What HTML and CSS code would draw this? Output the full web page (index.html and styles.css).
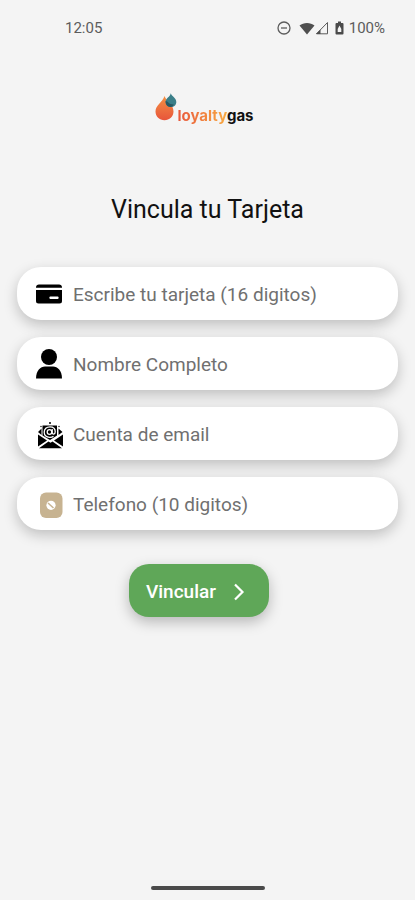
FILE: index.html
```html
<!DOCTYPE html>
<html lang="es">
<head>
<meta charset="UTF-8">
<meta name="viewport" content="width=device-width, initial-scale=1.0">
<title>Vincula tu Tarjeta</title>
<link rel="stylesheet" href="styles.css">
</head>
<body>
  <div class="status-bar">
    <span>12:05</span>
    <div class="status-icons">
      <svg class="icon-dnd" width="14" height="14" viewBox="0 0 14 14" fill="none" stroke="#5c5c5c" stroke-width="1.3">
        <circle cx="7" cy="7" r="6"/>
        <path d="M4 7h6"/>
      </svg>
      <svg width="16" height="13" viewBox="0 0 16 13">
        <path d="M0.5 3.5C4.5 0 11.5 0 15.5 3.5L8 12.5Z" fill="#4f4f4f"/>
      </svg>
      <svg width="14" height="14" viewBox="0 0 14 14">
        <path d="M1.5 12.8H12.5V1.5Z" fill="none" stroke="#5c5c5c"/>
        <path d="M1 13L5.5 8.5V13Z" fill="#4f4f4f"/>
      </svg>
      <svg class="icon-battery" width="9" height="14" viewBox="0 0 9 14">
        <path d="M3 0.5h3v1.5h1.5a1 1 0 0 1 1 1v9.5a1 1 0 0 1-1 1h-6a1 1 0 0 1-1-1V3a1 1 0 0 1 1-1H3z" fill="#4a4a4a"/>
        <path d="M4.5 4.5L6.3 8v3H2.7V8z" fill="#f4f4f4"/>
      </svg>
      <span>100%</span>
    </div>
  </div>

  <main class="container">
    <div class="logo">
      <svg width="22" height="28" viewBox="0 0 22 28">
        <defs>
          <linearGradient id="flame" x1="0" y1="0" x2="0" y2="1">
            <stop offset="0" stop-color="#f39143"/>
            <stop offset="1" stop-color="#e8553b"/>
          </linearGradient>
        </defs>
        <path d="M9.5 3C11 8 18.5 11 18.5 18.5C18.5 23.5 14.5 27.2 9.5 27.2C4.5 27.2 0.5 23.5 0.5 18.5C0.5 12 7.5 9.5 9.5 3Z" fill="url(#flame)"/>
        <path d="M15.8 0.3C16.8 3.5 21.3 5 21.3 9C21.3 12 19 14 16 14C13 14 10.6 12 10.6 9C10.6 5.3 15 4 15.8 0.3Z" fill="#3b7f89"/>
        <path d="M10.6 8C13 8 13.5 11.5 18.8 11.5C18 13 17 14 15.5 14C12.5 13.8 10.4 11.5 10.6 8Z" fill="#285761"/>
      </svg>
      <span class="logo-text"><span class="logo-loyalty">loyalty</span>gas</span>
    </div>

    <h1>Vincula tu Tarjeta</h1>

    <form class="card-form">
      <label class="field">
        <svg class="field-icon" width="28" height="32" viewBox="0 0 28 32">
          <path d="M1 9.2a3 3 0 0 1 3-2.7h20a3 3 0 0 1 3 2.7v0.6H1z"/>
          <path d="M1 12h26v11a2.5 2.5 0 0 1-2.5 2.5h-21A2.5 2.5 0 0 1 1 23z"/>
          <rect x="14.5" y="18.5" width="9" height="2.5" rx="0.8" fill="#fff"/>
        </svg>
        <input type="text" aria-label="Tarjeta" placeholder="Escribe tu tarjeta (16 digitos)">
      </label>
      <label class="field">
        <svg class="field-icon" width="28" height="32" viewBox="0 0 28 32">
          <circle cx="14" cy="9" r="8"/>
          <path d="M1 30.5C1 22.5 5.5 18.5 10 18.5h8c4.5 0 9 4 9 12z"/>
        </svg>
        <input type="text" aria-label="Nombre" placeholder="Nombre Completo">
      </label>
      <label class="field">
        <svg class="field-icon" width="28" height="32" viewBox="0 0 28 32">
          <path d="M7.5 7.5h14.5v10L15 22L7.5 17.5z"/>
          <path d="M3 14L6.5 10.5V17zM27.5 14L23.5 10.5V17z"/>
          <path d="M3 16.5L12 22.5L3 28.5zM28 16.5L19 22.5L28 28.5zM4 30.2L13.5 23.5L15.5 24.7L17.5 23.5L27 30.2z"/>
          <circle cx="15" cy="5" r="1"/>
          <circle cx="6" cy="8.5" r="0.7"/>
          <circle cx="24" cy="8.5" r="0.7"/>
          <g fill="none" stroke="#fff" stroke-width="1.3">
            <circle cx="14.5" cy="14" r="2.3"/>
            <path d="M17.2 11v3.5c0 2.5 3 2 3-0.8C20.2 10.5 18 8.8 15 8.8C11.5 8.8 9.2 11 9.2 14.2C9.2 17.5 11.5 19.5 15 19.3C16.5 19.3 17.5 19 18.5 18.2"/>
          </g>
        </svg>
        <input type="email" aria-label="Email" placeholder="Cuenta de email">
      </label>
      <label class="field">
        <svg class="field-icon" width="28" height="32" viewBox="0 0 28 32">
          <rect x="5" y="4.5" width="22.5" height="25.5" rx="6" fill="#c7b391"/>
          <circle cx="16" cy="17.3" r="4.6" fill="#fff"/>
          <path d="M13 15L18.5 20" stroke="#c7b391" stroke-width="1.5"/>
        </svg>
        <input type="tel" aria-label="Telefono" placeholder="Telefono (10 digitos)">
      </label>

      <button class="btn" type="button">
        Vincular
        <svg width="12" height="18" viewBox="0 0 12 18" fill="none" stroke="#fff" stroke-width="2.2">
          <path d="M2 1.5L9.5 9L2 16.5"/>
        </svg>
      </button>
    </form>
  </main>

  <div class="home-bar"></div>
</body>
</html>
```

FILE: styles.css
```css
* {
  box-sizing: border-box;
}

body {
  font-family: Roboto, sans-serif;
  margin: 0;
  min-height: 100vh;
  display: flex;
  flex-direction: column;
  background-color: #f4f4f4;
  color: #111;
}

.status-bar {
  display: flex;
  justify-content: space-between;
  align-items: center;
  height: 56px;
  padding: 0 30px 0 65px;
  font-size: 15px;
  color: #5c5c5c;
}

.status-icons {
  display: flex;
  align-items: center;
}

.icon-dnd {
  margin-right: 8px;
}

.icon-battery {
  margin: 0 5px 0 6px;
}

.container {
  flex: 1;
  padding: 37px 17px 0;
}

.logo {
  display: flex;
  justify-content: center;
  height: 32px;
  padding-right: 6px;
}

.logo-text {
  font-family: Inter, sans-serif;
  font-size: 15px;
  font-weight: 700;
  line-height: 20px;
  padding-top: 13px;
}

.logo-loyalty {
  background: linear-gradient(to right, #e8553b, #f8a941);
  background-clip: text;
  -webkit-background-clip: text;
  color: transparent;
}

h1 {
  margin: 69px 0 41px;
  font-size: 25px;
  font-weight: 400;
  line-height: 32px;
  text-align: center;
}

.card-form {
  display: flex;
  flex-direction: column;
  gap: 17px;
}

.field {
  display: flex;
  align-items: center;
  gap: 10px;
  height: 53px;
  padding: 0 18px;
  border-radius: 24px;
  background-color: #fff;
  box-shadow: 0 5px 14px rgba(0, 0, 0, 0.22);
}

.field-icon {
  flex: none;
}

.field input {
  flex: 1;
  min-width: 0;
  padding: 2px 0 0;
  border: none;
  outline: none;
  background: none;
  font-family: inherit;
  font-size: 19px;
  color: #111;
}

.field input::placeholder {
  color: #707070;
}

.btn {
  display: flex;
  align-items: center;
  align-self: center;
  gap: 17px;
  height: 53px;
  margin: 17px 17px 0 0;
  padding: 2px 24px 0 17px;
  border: none;
  border-radius: 20px;
  background-color: #5fa758;
  box-shadow: 0 5px 14px rgba(0, 0, 0, 0.25);
  color: #fff;
  font-family: inherit;
  font-size: 19px;
  font-weight: 500;
  cursor: pointer;
}

.home-bar {
  align-self: center;
  width: 114px;
  height: 4px;
  margin-bottom: 10px;
  border-radius: 2px;
  background-color: #4a4a4a;
}
```
